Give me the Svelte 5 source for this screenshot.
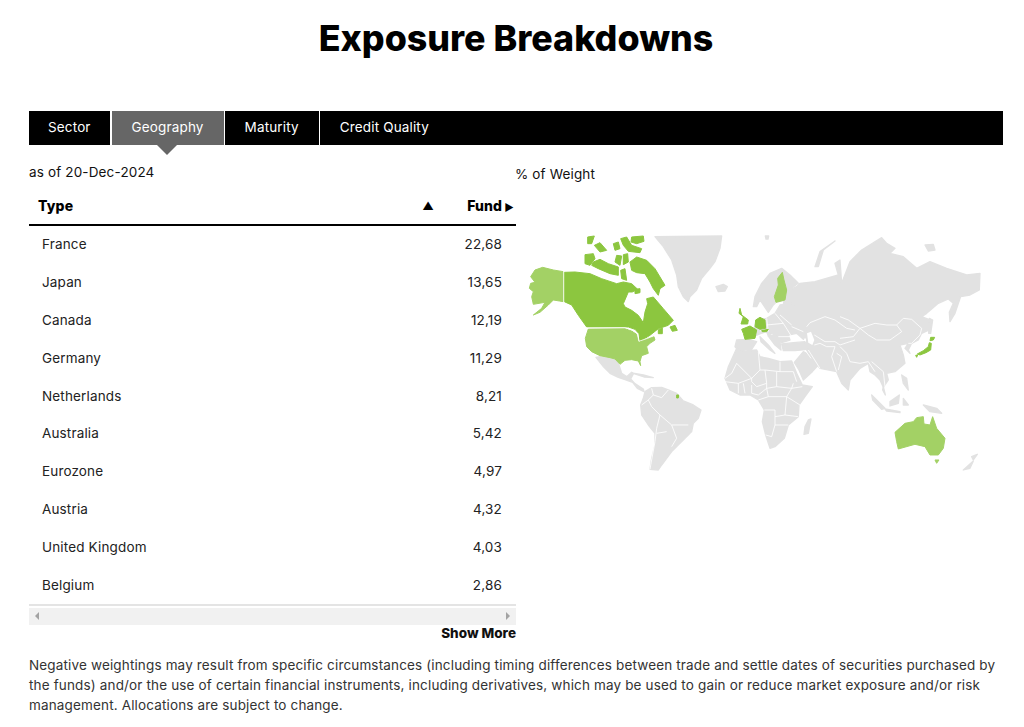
<script>
	const tabs = ['Sector', 'Geography', 'Maturity', 'Credit Quality'];
	const rows = [
		['France', '22,68'],
		['Japan', '13,65'],
		['Canada', '12,19'],
		['Germany', '11,29'],
		['Netherlands', '8,21'],
		['Australia', '5,42'],
		['Eurozone', '4,97'],
		['Austria', '4,32'],
		['United Kingdom', '4,03'],
		['Belgium', '2,86']
	];
</script>

<div class="page">
	<h1 class="title">Exposure Breakdowns</h1>

	<div class="tabs">
		{#each tabs as tab}
			<div class="tab" class:active={tab === 'Geography'}>{tab}</div>
		{/each}
	</div>

	<div class="panels">
		<div class="left">
			<p class="as-of">as of 20-Dec-2024</p>
			<table class="table">
				<thead>
					<tr>
						<th class="type">Type<span class="sort">▲</span></th>
						<th class="fund">Fund<span class="next">▶</span></th>
					</tr>
				</thead>
				<tbody>
					{#each rows as [name, value]}
						<tr>
							<td class="name">{name}</td>
							<td class="value">{value}</td>
						</tr>
					{/each}
				</tbody>
			</table>
			<div class="scrollbar">
				<span class="arrow-left"></span>
				<span class="arrow-right"></span>
			</div>
			<div class="more">Show More</div>
		</div>

		<div class="right">
			<p class="weight">% of Weight</p>
			<svg class="map" viewBox="516 225 487 250" width="487" height="250">
				<!-- americas, traced at 3x from 520,225 -->
				<g transform="translate(520 225) scale(0.3333)">
					<g class="land">
						<path d="M405,35 L605,33 L600,70 L585,110 L570,130 L545,160 L530,195 L510,215 L505,230 L490,215 L475,185 L470,150 L455,105 L430,65 Z" />
						<path d="M588,185 L610,178 L622,185 L615,198 L595,200 Z" />
						<path d="M228,397 L240,395 L268,400 L285,405 L297,420 L305,445 L320,455 L335,442 L340,447 L332,462 L345,476 L370,492 L372,500 L352,490 L338,472 L315,464 L295,457 L270,445 L250,425 Z" />
						<path d="M335,444 L370,450 L400,458 L372,456 Z" />
						<path d="M375,500 L395,488 L425,487 L445,495 L470,505 L490,528 L520,540 L543,555 L535,580 L520,595 L515,620 L495,640 L470,665 L455,680 L440,700 L425,720 L415,735 L390,733 L395,700 L405,660 L405,625 L385,600 L365,570 L362,540 L370,520 Z" />
					</g>
					<g class="borders">
						<path d="M395,490 L400,510 L385,525 L365,540 M400,510 L425,518 L445,495 M385,525 L395,545 L420,570 L410,610 L405,650 L395,705 L390,733 M420,570 L455,600 L470,640 L455,665 M440,620 L410,625 M455,600 L505,600" />
					</g>
					<path class="mid" d="M130,140 L130,230 L118,228 L100,225 L85,240 L60,262 L40,270 L65,250 L75,232 L40,238 L35,215 L40,200 L28,190 L32,175 L45,172 L32,155 L45,135 L68,127 L100,135 Z" />
					<path class="mid" d="M205,312 L315,311 L335,318 L350,328 L355,350 L385,340 L402,335 L405,345 L390,355 L380,365 L385,385 L365,392 L360,410 L362,422 L355,408 L335,404 L315,406 L300,418 L285,402 L270,398 L240,392 L215,380 L200,365 L196,340 Z" />
					<g class="strong">
						<path d="M470,510 L476,510 L475,519 L470,519 Z" />
					</g>
				</g>

				<!-- canada, traced at 3x from 575,232 -->
				<g transform="translate(575 232) scale(0.3333)">
					<g class="strong">
						<path d="M-32,121 L0,120 L45,125 L80,140 L125,155 L145,150 L170,155 L188,172 L172,180 L160,180 L145,215 L150,225 L170,235 L190,250 L205,272 L210,240 L218,215 L215,200 L235,195 L265,230 L295,265 L280,280 L250,290 L225,310 L195,328 L192,305 L180,292 L160,285 L35,285 L10,250 L-10,219 L-32,209 Z" />
						<path d="M165,90 L185,75 L215,85 L240,110 L255,135 L270,160 L255,170 L250,190 L235,170 L225,150 L210,125 L185,122 L170,115 Z" />
						<path d="M55,90 L75,82 L100,95 L130,105 L130,130 L105,125 L70,110 L50,100 Z" />
						<path d="M30,68 L55,65 L60,80 L45,100 L30,95 Z" />
						<path d="M38,15 L58,12 L50,35 L38,35 Z" />
						<path d="M58,40 L75,32 L95,55 L75,60 Z" />
						<path d="M115,35 L130,30 L135,50 L120,55 Z" />
						<path d="M137,20 L155,15 L170,40 L200,50 L195,62 L160,58 L145,40 Z" />
						<path d="M170,15 L205,12 L207,28 L185,35 L168,30 Z" />
						<path d="M125,70 L140,72 L135,100 L120,90 Z" />
						<path d="M145,68 L158,65 L160,90 L145,98 Z" />
						<path d="M137,115 L150,110 L155,145 L140,140 Z" />
						<path d="M180,172 L195,170 L195,182 L180,185 Z" />
						<path d="M285,285 L300,280 L307,295 L292,298 Z" />
						<path d="M250,293 L262,288 L262,305 L250,305 Z" />
					</g>
					<g class="borders">
						<path d="M-34,115 L-34,212 M31,288 L150,287 L170,294 L187,304 L192,328 L220,318 L239,310" />
					</g>
				</g>

				<!-- russia and asia outline, traced at 3x from 740,225 -->
				<g transform="translate(740 225) scale(0.3333)">
					<g class="land">
						<path d="M135,200 L170,185 L180,175 L225,170 L295,150 L285,115 L300,105 L305,175 L330,110 L365,75 L425,38 L440,55 L465,70 L450,85 L490,95 L530,130 L570,110 L620,130 L680,150 L720,145 L718,195 L690,210 L662,215 L645,265 L630,290 L628,262 L640,235 L625,222 L595,235 L560,265 L545,275 L570,285 L568,315 L545,325 L535,345 L515,355 L505,375 L510,385 L495,370 L505,355 L480,360 L490,390 L495,415 L465,440 L440,445 L445,465 L430,487 L420,465 L405,450 L390,440 L385,415 L360,430 L330,465 L325,495 L305,475 L290,440 L240,430 L220,405 L205,385 L200,375 L200,340 L172,325 L160,285 L130,240 Z" />
						<path d="M40,245 L45,215 L65,175 L90,145 L125,130 L150,150 L175,175 L140,200 L135,225 L108,232 L100,240 L85,262 L70,240 L60,225 L50,245 Z" />
						<path d="M225,125 L240,80 L285,48 L250,75 L235,125 Z" />
						<path d="M555,60 L580,58 L585,75 L565,78 Z" />
						<path d="M76,33 L86,33 L84,42 L78,42 Z" />
						<path d="M205,585 L213,582 L205,625 L192,628 L195,605 Z" />
						<path d="M695,695 L712,688 L700,705 Z" />
						<path d="M670,735 L700,708 L690,730 Z" />
					</g>
					<path class="mid" d="M127,142 L132,165 L140,195 L135,225 L108,232 L103,215 L115,180 L113,160 Z" />
					<path class="mid" d="M465,622 L495,595 L520,590 L530,578 L550,575 L552,597 L570,600 L578,575 L590,610 L615,640 L610,670 L595,690 L570,690 L555,665 L525,658 L475,672 L470,650 Z" />
					<path class="mid" d="M585,705 L597,705 L590,715 Z" />
				</g>

				<!-- europe and west asia, traced at 3x from 725,300 -->
				<g transform="translate(725 300) scale(0.3333)">
					<g class="land">
						<path d="M88,85 L95,60 L125,55 L150,40 L165,15 L200,10 L250,60 L245,100 L235,118 L215,100 L190,105 L195,120 L170,128 L162,122 L150,105 L140,100 L130,108 L125,95 L108,100 L90,108 Z" />
						<path d="M130,108 L150,105 L165,125 L168,150 L150,135 Z" />
						<path d="M105,110 L130,135 L150,160 L135,150 L108,125 Z" />
						<path d="M35,120 L70,118 L95,125 L80,148 L40,150 L30,140 Z" />
						<path d="M170,132 L205,128 L240,125 L250,148 L210,152 L175,152 Z" />
						<path d="M208,187 L235,155 L245,160 L258,175 L280,195 L262,215 L235,240 L222,210 Z" />
					</g>
					<path class="water" d="M246,100 L258,95 L268,120 L262,135 L250,128 Z" />
					<g class="borders">
						<path d="M245,80 L255,68 L300,50 L330,60 L365,85 L390,90 M268,105 L300,125 L330,125 L345,135 L390,120" />
						<path d="M268,135 L285,130 L305,140 L330,140 L320,170 L335,215 M250,150 L285,205 M240,150 L258,175 M335,160 L350,170 L345,190 L340,210" />
						<path d="M100,55 L108,95 M125,55 L130,95 M125,75 L175,70 L200,110 L160,110 M150,40 L175,70 M165,45 L200,75 M200,80 L235,95" />
					</g>
					<g class="strong">
						<path d="M50,88 L75,78 L95,90 L90,115 L60,118 L55,100 Z" />
						<path d="M92,60 L105,52 L120,60 L122,85 L105,88 L90,80 Z" />
						<path d="M110,92 L130,88 L125,95 L112,95 Z" />
						<path d="M45,25 L50,45 L70,60 L68,72 L48,72 L55,50 L42,40 Z" />
					</g>
				</g>

				<!-- africa, traced at 3x from 725,345 -->
				<g transform="translate(725 345) scale(0.3333)">
					<path class="africa" d="M35,10 L60,18 L95,15 L105,35 L130,40 L165,50 L200,48 L215,85 L232,120 L262,125 L240,155 L222,180 L220,215 L190,240 L178,280 L150,305 L135,310 L122,270 L112,230 L118,195 L100,165 L75,150 L45,150 L15,135 L0,100 L10,65 Z" />
					<g class="borders">
						<path d="M100,20 L105,75 L120,75 L125,115 L95,125 L80,110 L80,100 L35,55 L20,85 L0,100 M105,75 L80,100" />
						<path d="M165,50 L165,80 L205,80 L215,110 M120,75 L165,80 M155,80 L155,125 L125,130 L125,115 M155,125 L200,130 L205,115" />
						<path d="M0,110 L40,115 L80,100 M40,115 L40,145 M55,115 L60,145 M80,120 L80,145 L100,150 L125,130 L130,155 L100,165" />
						<path d="M130,155 L185,155 L200,130 L232,125 M185,155 L180,210 L150,215 L150,195 L118,195 M185,155 L225,180 M180,210 L220,215 M150,215 L150,240 L190,240 M150,240 L140,275 L122,270" />
					</g>
				</g>

				<!-- east asia, traced at 3x from 840,300 -->
				<g transform="translate(840 300) scale(0.3333)">
					<g class="land">
						<path d="M268,55 L278,60 L272,100 L266,100 Z" />
						<path d="M95,285 L135,325 L125,328 L98,300 Z" />
						<path d="M150,305 L178,285 L175,310 L150,318 Z" />
						<path d="M130,260 L136,285 L128,270 Z" />
						<path d="M185,225 L200,235 L205,270 L190,250 Z" />
						<path d="M250,315 L290,325 L305,340 L270,335 Z" />
						<path d="M135,327 L180,335 L180,338 L140,333 Z" />
						<path d="M190,295 L205,315 L190,315 Z" />
					</g>
					<g class="borders">
						<path d="M0,50 L25,60 L60,85 L40,110 L0,115" />
						<path d="M60,85 L105,70 L140,75 L170,75 L190,55 L215,58 L245,85 L240,105 L215,130 L205,130" />
						<path d="M185,95 L150,120 L110,120 L85,105 L60,85 M170,75 L185,95" />
						<path d="M0,140 L20,160 L30,185 L60,190 L85,185 L105,215 M95,185 L130,215 L135,260" />
					</g>
					<g class="strong">
						<path d="M232,162 L250,152 L265,140 L268,128 L274,130 L272,150 L258,158 L240,165 Z" />
						<path d="M272,112 L284,112 L280,120 L270,122 Z" />
						<path d="M227,166 L233,165 L230,172 Z" />
					</g>
				</g>
			</svg>
		</div>
	</div>

	<p class="note">
		Negative weightings may result from specific circumstances (including timing differences between trade and settle dates of securities purchased by the funds) and/or the use of certain financial instruments, including derivatives, which may be used to gain or reduce market exposure and/or risk management. Allocations are subject to change.
	</p>
</div>

<style>
	:global(body) {
		background: #fff;
	}

	.page {
		padding: 16px 21px 0 29px;
		font-family: Inter, 'Liberation Sans', sans-serif;
		font-size: 13.5px;
		letter-spacing: 0.15px;
		color: #222;
	}

	.title {
		margin: 0 0 51px;
		font-size: 35.8px;
		line-height: 44px;
		font-weight: 800;
		letter-spacing: 0;
		text-align: center;
		color: #000;
	}

	.tabs {
		display: flex;
		height: 34px;
		background: #000;
	}

	.tab {
		display: flex;
		align-items: center;
		padding: 0 20px 2px;
		border-right: 1px solid #fff;
		color: #fff;
		font-size: 13.5px;
		font-weight: 400;
	}

	.tab:first-child {
		padding: 0 19px 2px;
	}

	.tab:last-child {
		border-right: 0;
	}

	.tab.active {
		position: relative;
		background: #666;
		border-left: 1px solid #fff;
	}

	.tab.active::after {
		content: '';
		position: absolute;
		top: 100%;
		left: 45px;
		border: 10px solid transparent;
		border-top-color: #666;
		border-bottom: 0;
	}

	.panels {
		display: grid;
		grid-template-columns: 487px 487px;
	}

	.as-of {
		margin: 18px 0 0;
		line-height: 18px;
		color: #111;
	}

	.table {
		width: 100%;
		border-collapse: collapse;
		margin-top: 6px;
	}

	.table th {
		height: 37px;
		border-bottom: 2px solid #000;
		font-size: 14px;
		font-weight: 800;
		color: #000;
		padding: 0;
	}

	.type {
		padding-left: 9px !important;
		text-align: left;
		position: relative;
	}

	.sort {
		position: absolute;
		right: 2px;
		top: 12px;
		font-size: 11px;
	}

	.fund {
		width: 80px;
		text-align: right;
		white-space: nowrap;
	}

	.next {
		font-size: 10px;
		margin-left: 2px;
		margin-right: 2px;
	}

	.table td {
		height: 36.8px;
		padding: 0 0 1px;
	}

	.name {
		padding-left: 13px !important;
	}

	.value {
		padding-right: 14px !important;
		text-align: right;
	}

	.table tr:last-child td {
		border-bottom: 2px solid #e4e4e4;
	}

	.scrollbar {
		display: flex;
		align-items: center;
		justify-content: space-between;
		height: 17px;
		margin-top: 2px;
		padding: 0 6px;
		background: #f1f1f1;
	}

	.arrow-left,
	.arrow-right {
		border: 4px solid transparent;
	}

	.arrow-left {
		border-right-color: #a3a3a3;
		border-left: 0;
	}

	.arrow-right {
		border-left-color: #a3a3a3;
		border-right: 0;
	}

	.more {
		text-align: right;
		font-weight: 800;
		line-height: 16px;
		letter-spacing: 0;
		color: #111;
	}

	.weight {
		margin: 20px 0 0 -1px;
		line-height: 18px;
		color: #111;
	}

	.map {
		display: block;
		margin-top: 42px;
	}

	.land path,
	.africa {
		fill: #e2e2e2;
		stroke: #e2e2e2;
		stroke-width: 4;
		stroke-linejoin: round;
	}

	.borders path {
		fill: none;
		stroke: #fff;
		stroke-width: 2.5;
		stroke-linejoin: round;
	}

	.strong path {
		fill: #8cc63f;
		stroke: #8cc63f;
		stroke-width: 3;
		stroke-linejoin: round;
	}

	.mid {
		fill: #a3d165;
		stroke: #a3d165;
		stroke-width: 3;
		stroke-linejoin: round;
	}

	.water {
		fill: #fff;
	}

	.note {
		margin: 14px 0 0;
		line-height: 20px;
		color: #333;
	}
</style>
